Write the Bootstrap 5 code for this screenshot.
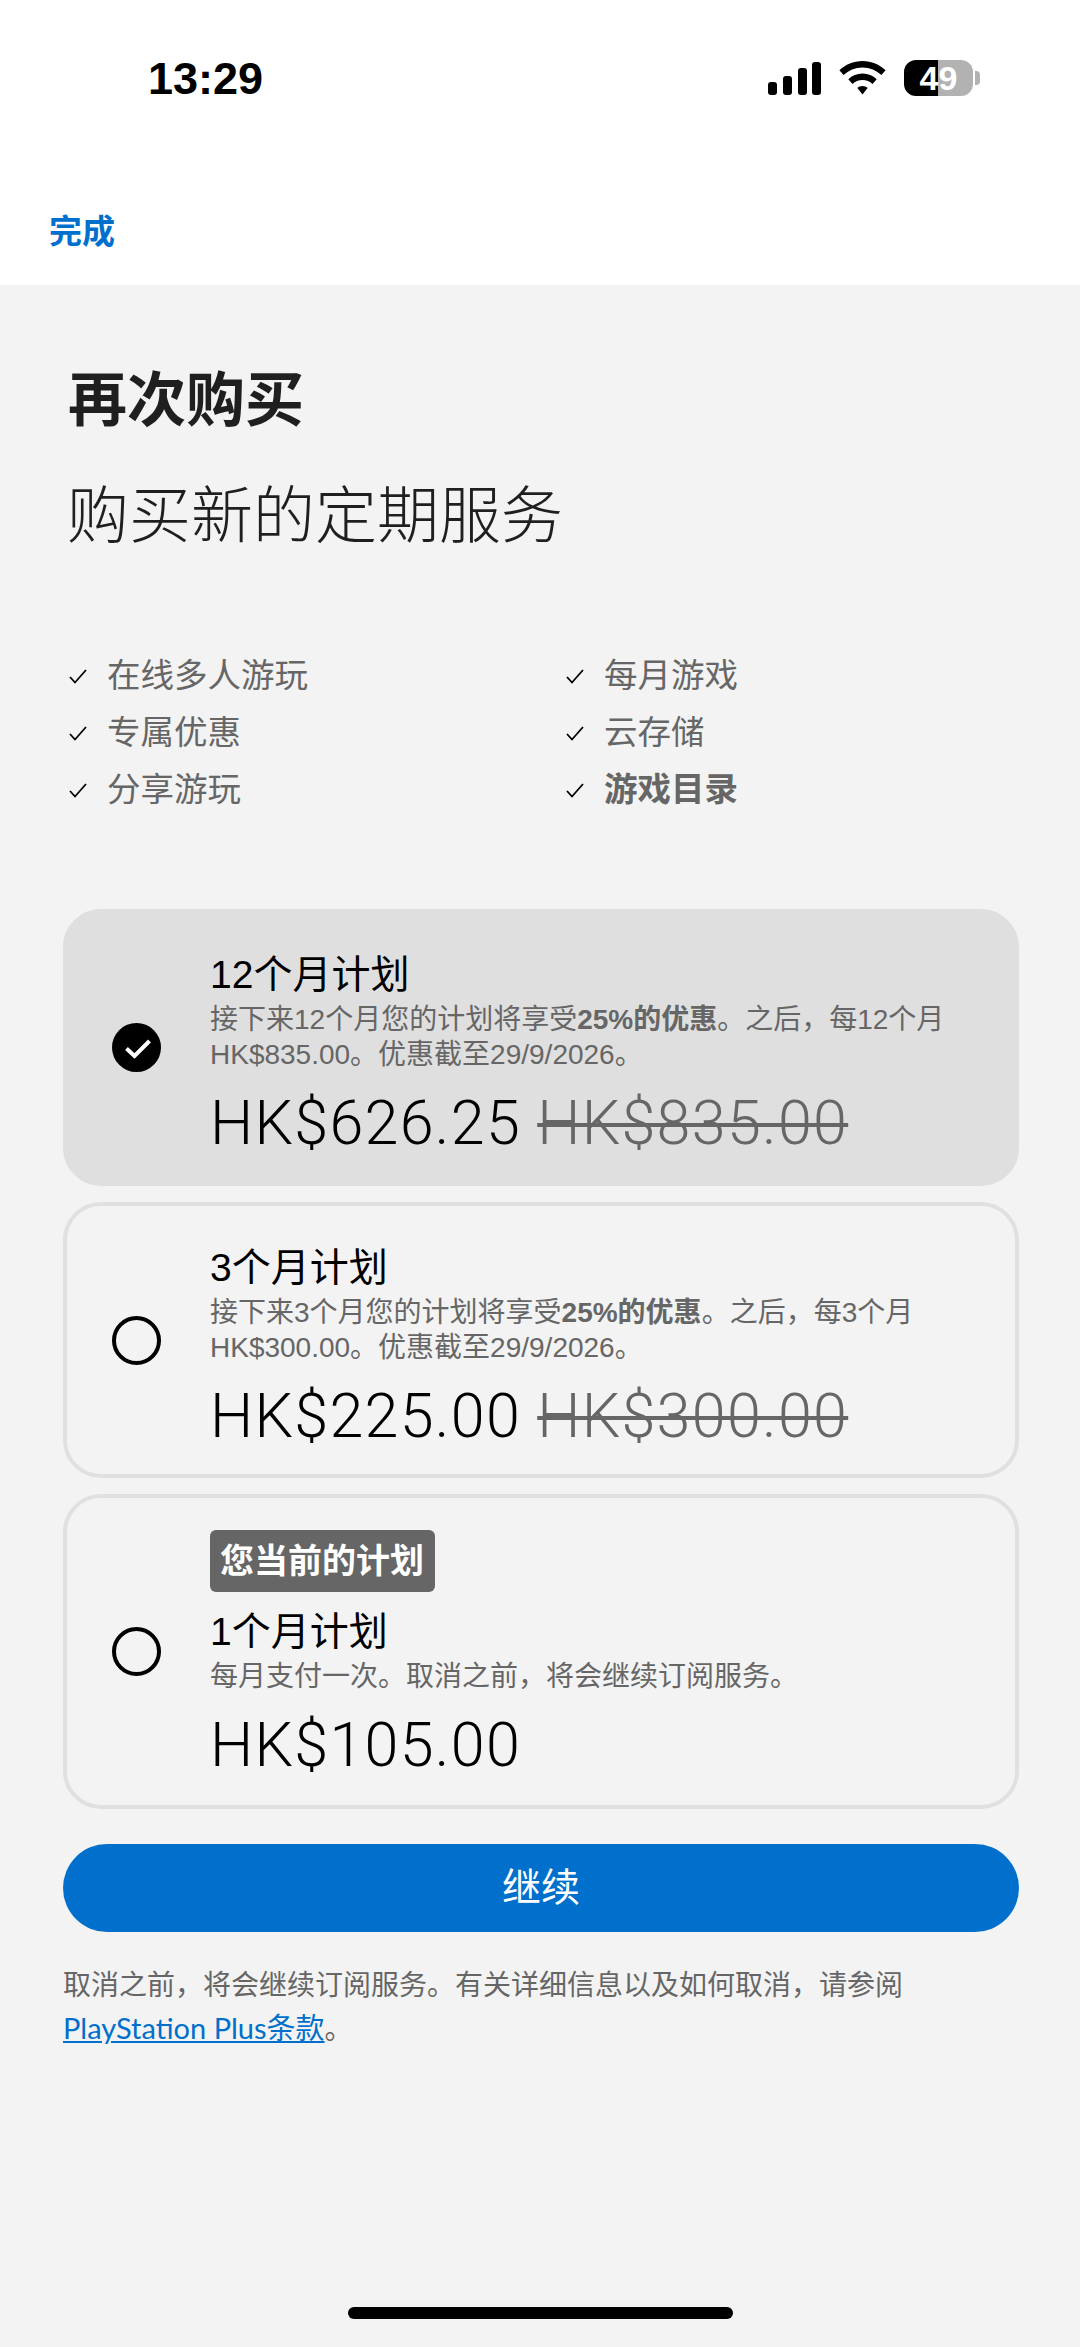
<!doctype html>
<html lang="zh-Hans">
<head>
<meta charset="utf-8">
<title>再次购买</title>
<link href="https://cdn.jsdelivr.net/npm/bootstrap@5.3.0/dist/css/bootstrap.min.css" rel="stylesheet">
<style>
:root { --cn: "Liberation Sans", "Noto Sans CJK SC", sans-serif; }
body { background:#f3f3f3; font-family:var(--cn); color:#000; }
.shell { min-height:2347px; }
.top-area { background:#fff; height:285px; flex:none; }
.status-row { height:150px; padding:0 100px 0 148px; }
.clock { font-size:45px; font-weight:700; line-height:1; margin-top:6px; }
.sys-icons { gap:18px; margin-top:6px; }
.batt { width:69px; height:36px; border-radius:12px; overflow:hidden; background:linear-gradient(90deg,#000 0,#000 34px,#b2b2b2 34px); color:#fff; font-size:34px; font-weight:700; line-height:36px; text-align:center; }
.batt-wrap { gap:2px; }
.batt-nub { width:5px; height:14px; background:#b2b2b2; border-radius:0 4px 4px 0; }
.done-link { display:block; margin:62px 0 0 49px; font-size:33px; line-height:40px; font-weight:700; color:#0070cc; text-decoration:none; }
.main-area { padding:81px 61px 0 63px; }
.page-title { font-size:59px; line-height:70px; font-weight:700; color:#1f1f1f; margin:0 0 0 5px; }
.page-sub { font-size:62px; line-height:74px; font-weight:300; color:#1f1f1f; margin:44px 0 0 4px; }
.perks { margin:101px 0 0 6px; display:grid; grid-template-columns:497px 1fr; row-gap:15px; }
.perk { color:#666; font-size:33.500px; line-height:42px; gap:20px; }
.perk svg { flex:none; }
.plans { margin-top:98px; gap:16px; }
.plan { border:4px solid #e0e0e0; border-radius:38px; padding:0 40px 0 45px; gap:49px; }
.plan-on { background:#dfdfdf; border-color:#dfdfdf; }
.h-a { height:277px; }
.h-b { height:276px; }
.h-c { height:315px; }
.radio-mark { flex:none; width:49px; height:49px; }
.plan-body { padding-top:17px; }
.h-c .plan-body { padding-top:8px; }
.plan-name { font-size:39px; line-height:44px; }
.plan-note { font-size:28px; line-height:35px; color:#666; margin-top:5px; }
.plan-note b { font-weight:700; }
.plan-price { font-family:Roboto, "Liberation Sans", sans-serif; font-weight:300; font-size:61px; letter-spacing:1.300px; line-height:72px; margin-top:15px; white-space:nowrap; }
.plan-old { color:#666; text-decoration:line-through; text-decoration-thickness:4px; }
.tag-current { display:inline-block; background:#666; color:#fff; font-size:34px; font-weight:700; line-height:62px; height:62px; padding:0 11px 0 10px; border-radius:6px; margin-bottom:18px; }
.go-btn { display:block; width:100%; height:88px; margin-top:35px; border:0; border-radius:44px; background:#0070cc; color:#fff; font-size:39px; line-height:88px; padding:0; }
.fine { font-size:28px; line-height:42px; color:#666; margin:33px 0 0; }
.fine a { color:#0070cc; font-family:Lato, "Noto Sans CJK SC", sans-serif; font-size:29px; }
.home-bar { width:385px; height:12px; border-radius:6px; background:#000; margin:auto auto 28px; flex:none; }
</style>
</head>
<body>
<div class="shell d-flex flex-column">
  <header class="top-area">
    <div class="status-row d-flex justify-content-between align-items-center">
      <span class="clock">13:29</span>
      <div class="sys-icons d-flex align-items-center">
        <svg width="53" height="33" viewBox="0 0 53 33" aria-hidden="true"><rect x="0" y="20" width="9" height="13" rx="3"/><rect x="15" y="14" width="9" height="19" rx="3"/><rect x="30" y="6" width="9" height="27" rx="3"/><rect x="44" y="0" width="9" height="33" rx="3"/></svg>
        <svg width="47" height="34" viewBox="0 0 47 34" aria-hidden="true"><path d="M23.5 0C14.5 0 6.4 3.5 0.4 9.3L4.6 14C9.5 9.3 16.2 6.4 23.5 6.4S37.500 9.3 42.400 14L46.600 9.300C40.600 3.500 32.500 0 23.500 0Z"/><path d="M23.500 12.500C18 12.500 13 14.700 9.300 18.300L13.500 23C16.100 20.400 19.600 18.900 23.500 18.900S30.900 20.400 33.500 23L37.700 18.300C34 14.700 29 12.500 23.500 12.500Z"/><path d="M23.500 25C21.500 25 19.800 25.700 18.400 26.900L23.500 33.500L28.600 26.900C27.200 25.700 25.500 25 23.500 25Z"/></svg>
        <div class="batt-wrap d-flex align-items-center">
          <div class="batt">49</div>
          <div class="batt-nub"></div>
        </div>
      </div>
    </div>
    <a class="done-link" href="#">完成</a>
  </header>

  <main class="main-area">
    <h1 class="page-title">再次购买</h1>
    <p class="page-sub">购买新的定期服务</p>

    <div class="perks">
      <div class="perk d-flex align-items-center"><svg width="18" height="15" viewBox="0 0 18 15" aria-hidden="true"><path d="M1 8l5 5.500L17 1" fill="none" stroke="#000" stroke-width="1.800"/></svg><span>在线多人游玩</span></div>
      <div class="perk d-flex align-items-center"><svg width="18" height="15" viewBox="0 0 18 15" aria-hidden="true"><path d="M1 8l5 5.500L17 1" fill="none" stroke="#000" stroke-width="1.800"/></svg><span>每月游戏</span></div>
      <div class="perk d-flex align-items-center"><svg width="18" height="15" viewBox="0 0 18 15" aria-hidden="true"><path d="M1 8l5 5.500L17 1" fill="none" stroke="#000" stroke-width="1.800"/></svg><span>专属优惠</span></div>
      <div class="perk d-flex align-items-center"><svg width="18" height="15" viewBox="0 0 18 15" aria-hidden="true"><path d="M1 8l5 5.500L17 1" fill="none" stroke="#000" stroke-width="1.800"/></svg><span>云存储</span></div>
      <div class="perk d-flex align-items-center"><svg width="18" height="15" viewBox="0 0 18 15" aria-hidden="true"><path d="M1 8l5 5.500L17 1" fill="none" stroke="#000" stroke-width="1.800"/></svg><span>分享游玩</span></div>
      <div class="perk d-flex align-items-center"><svg width="18" height="15" viewBox="0 0 18 15" aria-hidden="true"><path d="M1 8l5 5.500L17 1" fill="none" stroke="#000" stroke-width="1.800"/></svg><span class="fw-bold">游戏目录</span></div>
    </div>

    <div class="plans d-flex flex-column">
      <div class="plan plan-on h-a d-flex align-items-center">
        <svg class="radio-mark" viewBox="0 0 49 49" aria-hidden="true"><circle cx="24.500" cy="24.500" r="24.500"/><path d="M14.500 25.500l8 7.500L37.500 18" fill="none" stroke="#fff" stroke-width="4"/></svg>
        <div class="plan-body">
          <div class="plan-name">12个月计划</div>
          <div class="plan-note">接下来12个月您的计划将享受<b>25%的优惠</b>。之后，每12个月<br>HK$835.00。优惠截至29/9/2026。</div>
          <div class="plan-price">HK$626.25 <span class="plan-old">HK$835.00</span></div>
        </div>
      </div>
      <div class="plan h-b d-flex align-items-center">
        <svg class="radio-mark" viewBox="0 0 49 49" aria-hidden="true"><circle cx="24.500" cy="24.500" r="22.500" fill="none" stroke="#000" stroke-width="4"/></svg>
        <div class="plan-body">
          <div class="plan-name">3个月计划</div>
          <div class="plan-note">接下来3个月您的计划将享受<b>25%的优惠</b>。之后，每3个月<br>HK$300.00。优惠截至29/9/2026。</div>
          <div class="plan-price">HK$225.00 <span class="plan-old">HK$300.00</span></div>
        </div>
      </div>
      <div class="plan h-c d-flex align-items-center">
        <svg class="radio-mark" viewBox="0 0 49 49" aria-hidden="true"><circle cx="24.500" cy="24.500" r="22.500" fill="none" stroke="#000" stroke-width="4"/></svg>
        <div class="plan-body">
          <span class="tag-current">您当前的计划</span>
          <div class="plan-name">1个月计划</div>
          <div class="plan-note">每月支付一次。取消之前，将会继续订阅服务。</div>
          <div class="plan-price">HK$105.00</div>
        </div>
      </div>
    </div>

    <button class="go-btn btn" type="button">继续</button>
    <p class="fine">取消之前，将会继续订阅服务。有关详细信息以及如何取消，请参阅<br><a href="#">PlayStation Plus条款</a>。</p>
  </main>
  <div class="home-bar"></div>
</div>
<script src="https://cdn.jsdelivr.net/npm/bootstrap@5.3.0/dist/js/bootstrap.bundle.min.js"></script>
</body>
</html>
